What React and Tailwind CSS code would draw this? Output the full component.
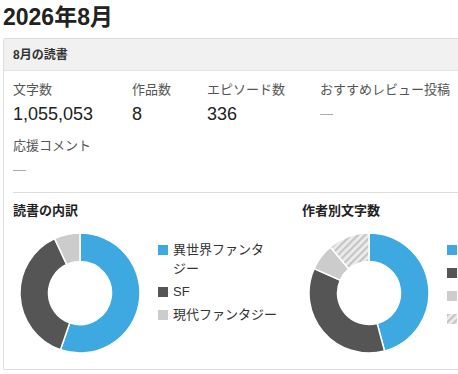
import React from "react";

const BLUE = "#3ea8e0";
const DARK = "#555555";
const LIGHT = "#cccccc";

function arcPath(a0, a1, R = 60, r = 31.5, c = 60) {
  const rad = (a) => ((a - 90) * Math.PI) / 180;
  const pt = (rr, a) => [c + rr * Math.cos(rad(a)), c + rr * Math.sin(rad(a))];
  const large = a1 - a0 > 180 ? 1 : 0;
  const [x0, y0] = pt(R, a0);
  const [x1, y1] = pt(R, a1);
  const [x2, y2] = pt(r, a1);
  const [x3, y3] = pt(r, a0);
  return `M${x0} ${y0} A${R} ${R} 0 ${large} 1 ${x1} ${y1} L${x2} ${y2} A${r} ${r} 0 ${large} 0 ${x3} ${y3} Z`;
}

function Donut({ id, segments }) {
  return (
    <svg width="120" height="120" viewBox="0 0 120 120" className="shrink-0">
      <defs>
        <pattern id={id} width="5" height="5" patternUnits="userSpaceOnUse" patternTransform="rotate(45)">
          <rect width="5" height="5" fill="#ececec" />
          <rect width="2.2" height="5" fill="#c4c4c4" />
        </pattern>
      </defs>
      {segments.map((s, i) => (
        <path
          key={i}
          d={arcPath(s.from, s.to)}
          fill={s.hatch ? `url(#${id})` : s.color}
          stroke="#fff"
          strokeWidth="1.5"
        />
      ))}
    </svg>
  );
}

function Legend({ items, id }) {
  return (
    <ul className="ml-[18px] mt-[7px] flex flex-col gap-[4px] text-[13px] leading-[19px] text-[#333]">
      {items.map((it, i) => (
        <li key={i} className="flex items-start min-h-[19px]">
          {it.hatch ? (
            <svg width="10" height="10" className="mt-[5px] shrink-0">
              <rect width="10" height="10" fill={`url(#${id})`} />
            </svg>
          ) : (
            <span className="mt-[5px] h-[10px] w-[10px] shrink-0" style={{ background: it.color }} />
          )}
          {it.label && <span className="ml-[5px] w-[106px]">{it.label}</span>}
        </li>
      ))}
    </ul>
  );
}

const stats = [
  { label: "文字数", value: "1,055,053", w: "w-[119px]" },
  { label: "作品数", value: "8", w: "w-[75px]" },
  { label: "エピソード数", value: "336", w: "w-[113px]" },
  { label: "おすすめレビュー投稿", value: null, w: "w-[140px]" },
  { label: "応援コメント", value: null, w: "w-[140px]" },
];

export default function App() {
  return (
    <div
      className="w-[458px] h-[374px] overflow-hidden bg-white pl-[3px] text-[#222]"
      style={{ fontFamily: '"Liberation Sans", Arial, "Noto Sans CJK JP", sans-serif' }}
    >
      <h1 className="pt-[2px] text-[23px] font-bold leading-[30px] text-[#222]">2026年8月</h1>

      <div className="mt-[6px] w-[600px] border border-[#dddddd] rounded-[2px]">
        <div className="h-[32px] flex items-center px-[9px] bg-[#f1f1f1] border-b border-[#e4e4e4] text-[12px] font-bold text-[#333]">
          8月の読書
        </div>

        <div className="px-[9px]">
          {/* Stats */}
          <div className="flex flex-wrap pt-[9px] gap-y-[10px]">
            {stats.map((s, i) => (
              <div key={i} className={s.w}>
                <p className="text-[13px] leading-[20px] text-[#555]">{s.label}</p>
                {s.value ? (
                  <p className="mt-[2px] text-[18px] leading-[24px] text-[#222]">{s.value}</p>
                ) : (
                  <p className="mt-[2px] text-[13px] leading-[24px] text-[#aaa]">—</p>
                )}
              </div>
            ))}
          </div>

          <div className="mt-[10px] border-t border-[#dddddd]" />

          {/* Charts */}
          <div className="grid grid-cols-[289px_289px] pb-[16px]">
            <div>
              <h3 className="pt-[8px] text-[13px] font-bold leading-[20px] text-[#222]">読書の内訳</h3>
              <div className="mt-[12px] flex items-start">
                <div className="ml-[7px]">
                  <Donut
                    id="hatch1"
                    segments={[
                      { from: 0, to: 199, color: BLUE },
                      { from: 199, to: 335, color: DARK },
                      { from: 335, to: 360, color: LIGHT },
                    ]}
                  />
                </div>
                <Legend
                  id="hatch1"
                  items={[
                    {
                      label: (
                        <>
                          異世界ファンタ<span className="whitespace-nowrap">ジー</span>
                        </>
                      ),
                      color: BLUE,
                    },
                    { label: "SF", color: DARK },
                    { label: "現代ファンタジー", color: LIGHT },
                  ]}
                />
              </div>
            </div>

            <div>
              <h3 className="pt-[8px] text-[13px] font-bold leading-[20px] text-[#222]">作者別文字数</h3>
              <div className="mt-[12px] flex items-start">
                <div className="ml-[7px]">
                  <Donut
                    id="hatch2"
                    segments={[
                      { from: 0, to: 165, color: BLUE },
                      { from: 165, to: 294, color: DARK },
                      { from: 294, to: 320, color: LIGHT },
                      { from: 320, to: 360, hatch: true },
                    ]}
                  />
                </div>
                <Legend
                  id="hatch2"
                  items={[
                    { color: BLUE },
                    { color: DARK },
                    { color: LIGHT },
                    { hatch: true },
                  ]}
                />
              </div>
            </div>
          </div>
        </div>
      </div>
    </div>
  );
}
